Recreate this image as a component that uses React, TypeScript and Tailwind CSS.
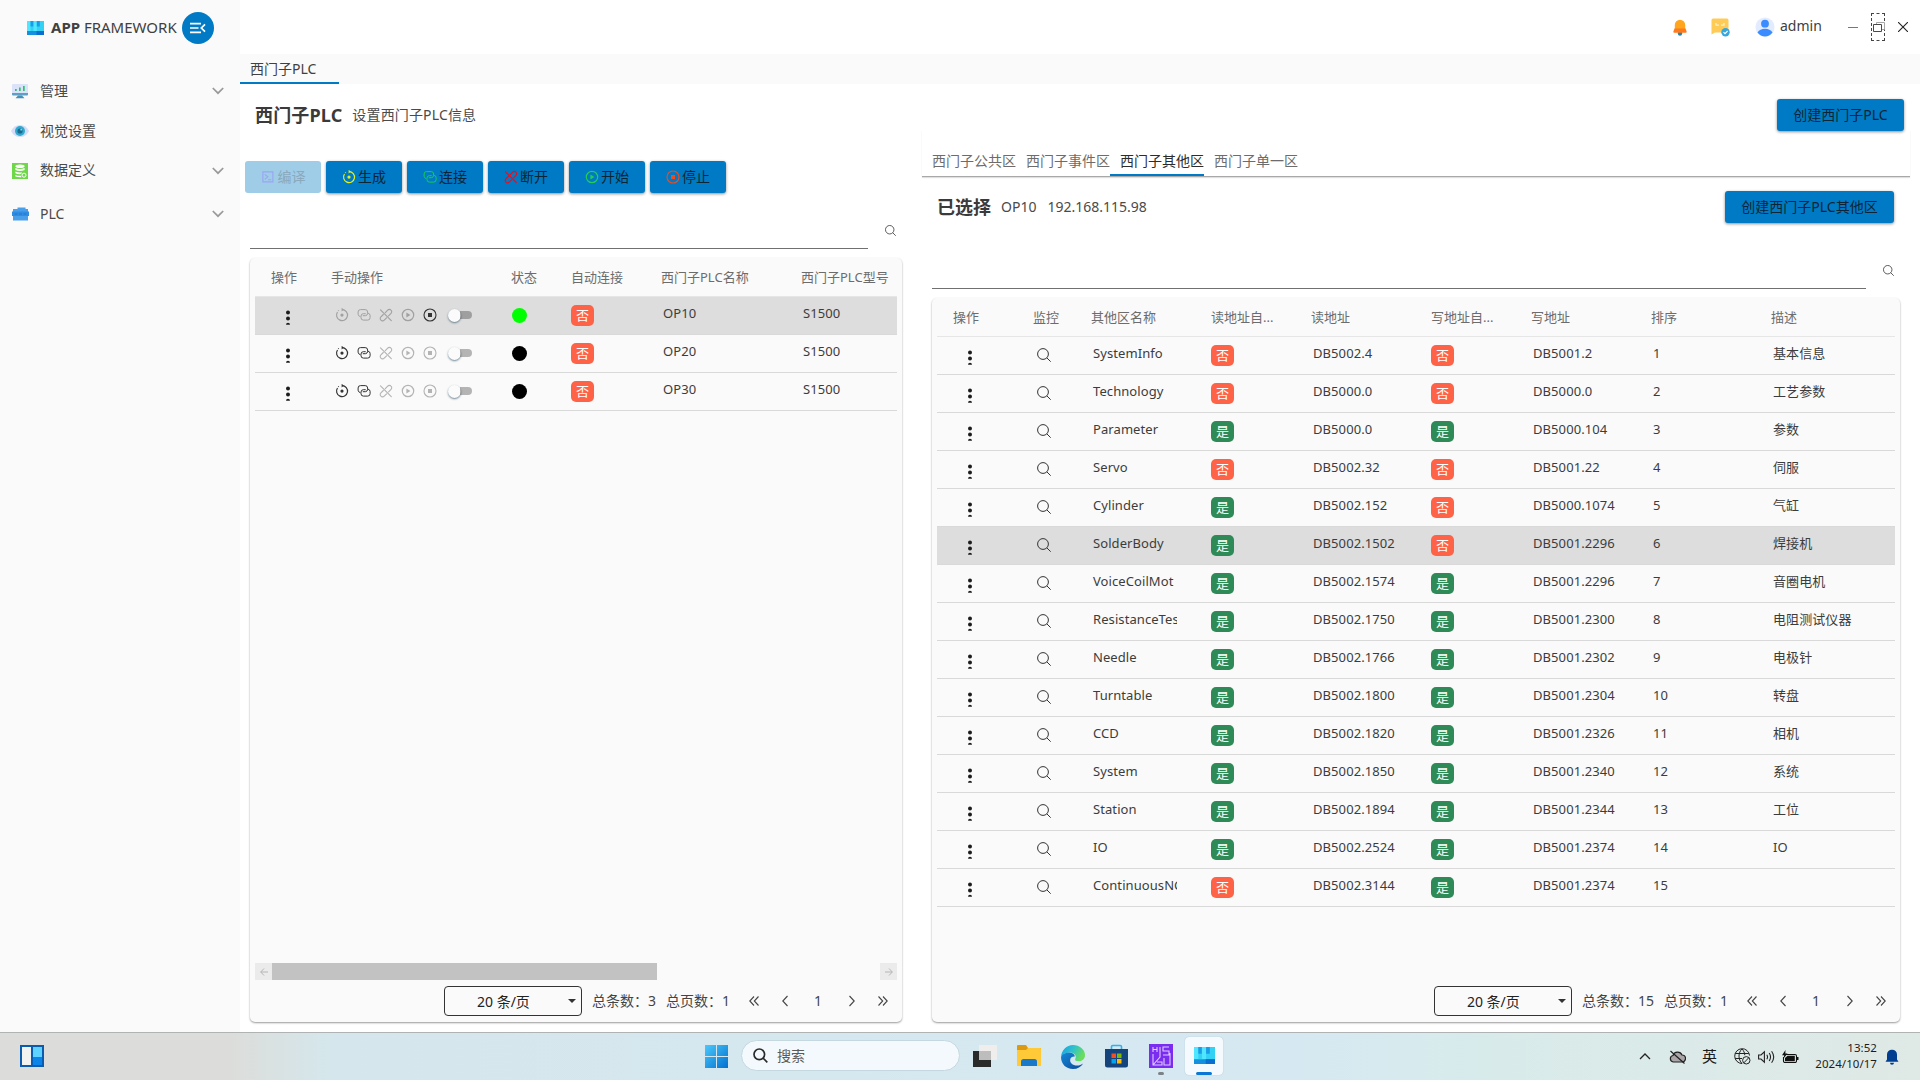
import React from "react";

type IconProps = { className?: string };

/* ---------- small icons ---------- */

const RegenIcon = ({ className = "" }: IconProps) => (
  <svg viewBox="0 0 14 14" className={`size-[14px] ${className}`} fill="none" stroke="currentColor" strokeWidth="1.2">
    <path d="M7 1.6A5.500 5.500 0 1 1 2.500 4" />
    <path d="M6.600 -.2v3.600l2.200-1.800z" fill="currentColor" stroke="none" />
    <circle cx="7" cy="7.100" r="1.600" fill="currentColor" stroke="none" />
    <path d="M3.200 2.900l.6-.5" />
  </svg>
);

const LinkIcon = ({ className = "" }: IconProps) => (
  <svg viewBox="0 0 14 14" className={`size-[14px] ${className}`} fill="none" stroke="currentColor" strokeWidth="1" strokeLinecap="round">
    <path d="M3 8.600A2.600 2.600 0 0 1 1.100 6.200V4A2.400 2.400 0 0 1 3.500 1.600h4.700A2.400 2.400 0 0 1 10.600 4v1.300A2.400 2.400 0 0 1 8.400 7.700H6.200" />
    <path d="M11.300 5.200a2.300 2.300 0 0 1 1.800 2.300v2.200a2.400 2.400 0 0 1-2.400 2.400H6.400A2.400 2.400 0 0 1 4 9.700V8.100a2.400 2.400 0 0 1 2.300-2.400h2" />
  </svg>
);

const UnlinkIcon = ({ className = "" }: IconProps) => (
  <svg viewBox="0 0 14 14" className={`size-[14px] ${className}`} fill="none" stroke="currentColor" strokeWidth="1.1" strokeLinecap="round">
    <path d="M6.300 4.600 8.700 2.100a2.300 2.300 0 0 1 3.300 0 2.300 2.300 0 0 1 0 3.300L9.600 7.800" />
    <path d="M4.300 6.500 1.900 8.900a2.300 2.300 0 0 0 0 3.300 2.300 2.300 0 0 0 3.300 0l2.400-2.400" />
    <path d="M1.500 1.800 12.300 12.600" />
  </svg>
);

const PlayIcon = ({ className = "" }: IconProps) => (
  <svg viewBox="0 0 14 14" className={`size-[14px] ${className}`} fill="none" stroke="currentColor" strokeWidth="1.2">
    <circle cx="7" cy="7" r="5.700" />
    <path d="M5.400 4.600v4.800L9.400 7z" fill="currentColor" stroke="none" />
  </svg>
);

const StopIcon = ({ className = "" }: IconProps) => (
  <svg viewBox="0 0 14 14" className={`size-[14px] ${className}`} fill="none" stroke="currentColor" strokeWidth="1.1">
    <circle cx="7" cy="7" r="6" />
    <path d="M5 5h4v4H5z" fill="currentColor" stroke="none" />
  </svg>
);

const CodeIcon = ({ className = "" }: IconProps) => (
  <svg viewBox="0 0 14 14" className={`size-[14px] ${className}`} fill="none" stroke="currentColor" strokeWidth="1.1">
    <path d="M1.900 1.900h10v10h-10zM3.800 4.300l3 2.500-3 2.500M7.200 9.800h3" />
  </svg>
);

const SearchIcon = ({ className = "" }: IconProps) => (
  <svg viewBox="0 0 14 14" className={className} fill="none" stroke="currentColor" strokeWidth="1">
    <circle cx="6" cy="6" r="5.400" />
    <path d="M9.900 9.900l3.800 3.800" />
  </svg>
);

const Chevron = () => (
  <svg viewBox="0 0 12 8" className="h-2 w-3" fill="none" stroke="#999" strokeWidth="1.7">
    <path d="M.8 1 6 6.200 11.200 1" />
  </svg>
);

const AppLogo = ({ className = "" }: IconProps) => (
  <svg viewBox="0 0 17 14" className={className} preserveAspectRatio="none">
    <path d="M0 0h17v10H0z" fill="#33d2f5" />
    <path d="M0 0h3.500v10H0zM6.500 0h3.300v10H6.500z" fill="#50e6ff" />
    <path d="M3.500 0h2.800v5.500H3.500zM9.800 0h3v5.500h-3z" fill="#1a9be8" />
    <path d="M0 10h17v4H0z" fill="#1490df" />
    <path d="M9.500 10H17v4H9.500z" fill="#0a6fd0" />
  </svg>
);

const DoubleLeft = () => (
  <svg viewBox="0 0 10 10" className="size-[10px]" fill="none" stroke="#444" strokeWidth="1.1">
    <path d="M5 .5.8 5 5 9.500M9.500 .5 5.300 5l4.200 4.500" />
  </svg>
);
const DoubleRight = () => (
  <svg viewBox="0 0 10 10" className="size-[10px]" fill="none" stroke="#444" strokeWidth="1.1">
    <path d="M5 .5 9.200 5 5 9.500M.5 .5 4.700 5 .5 9.500" />
  </svg>
);
const Left = () => (
  <svg viewBox="0 0 6 12" className="ml-[23px] h-3 w-[6px]" fill="none" stroke="#444" strokeWidth="1.1">
    <path d="M5.500 1 .8 6l4.700 5" />
  </svg>
);
const Right = () => (
  <svg viewBox="0 0 6 12" className="mr-[23px] ml-[27px] h-3 w-[6px]" fill="none" stroke="#444" strokeWidth="1.1">
    <path d="M.5 1 5.200 6 .5 11" />
  </svg>
);

/* ---------- shared pieces ---------- */

const Dots = () => (
  <svg viewBox="0 0 6 16" className="h-4 w-[6px]" fill="#1c1c1c">
    <circle cx="3" cy="2.400" r="2" />
    <circle cx="3" cy="8.400" r="2" />
    <path d="M1 14.800a2 2 0 0 1 4 0z" />
  </svg>
);

const Badge = ({ on }: { on: boolean }) => (
  <span
    className={`flex h-[21px] w-[23px] items-center justify-center rounded-[5px] text-[13px] leading-none text-white ${on ? "bg-[#2e8b57]" : "bg-[#ff6347]"}`}
  >
    {on ? "是" : "否"}
  </span>
);

const Cell = ({ children }: { children?: React.ReactNode }) => (
  <div className="mr-[14px] overflow-hidden pb-[6px] pl-[2px] leading-[20px] tracking-[0.08px] whitespace-nowrap">{children}</div>
);

const PrimaryButton = ({ children, className }: { children: React.ReactNode; className: string }) => (
  <button
    className={`flex h-8 shrink-0 items-center justify-center rounded-[3px] bg-[#007ac4] pb-px text-[14px] text-[#0b2536] shadow-[0_1px_3px_rgba(0,0,0,0.45)] ${className}`}
  >
    {children}
  </button>
);

const Switch = () => (
  <span className="ml-[3px] flex h-[15px] w-6 items-center">
    <span className="size-[13px] shrink-0 rounded-full bg-[#fbfbfb] shadow-[0_1px_2px_rgba(30,70,90,0.65)]" />
    <span className="-ml-px h-2 w-[12px] rounded-r-full bg-black/28" />
  </span>
);

const Pager = ({ total }: { total: number }) => (
  <div className="flex h-[30px] items-center text-[14px] leading-none text-[#444]">
    <div className="flex h-[30px] w-[138px] items-center rounded-[4px] border border-[#333] pr-[5px] pl-[32px] text-[#222]">
      <span className="flex-1 pt-px">20 条/页</span>
      <span className="border-x-[4px] border-t-[4px] border-x-transparent border-t-[#333]" />
    </div>
    <span className="ml-[10px]">总条数：{total}</span>
    <span className="ml-[10px] w-[65px] whitespace-nowrap">总页数：1</span>
    <div className="ml-[18px] flex items-center">
      <DoubleLeft />
      <Left />
      <span className="ml-[26px] w-2 text-center">1</span>
      <Right />
      <DoubleRight />
    </div>
  </div>
);

/* ---------- sidebar ---------- */

const MonitorGlyph = () => (
  <svg viewBox="0 0 16 16" className="size-4">
    <rect x="0" y="1" width="16" height="10.500" rx="1" fill="#dbe3fa" />
    <path d="M0 10h16v1.500a1 1 0 0 1-1 1H1a1 1 0 0 1-1-1z" fill="#5f9fc4" />
    <path d="M3 6h1.700v2H3zM7 4.500h1.700V8H7zM11 3h1.700v5H11z" fill="#35bd74" />
    <path d="M6 12.500h4l2.500 2.800h-9z" fill="#4590b8" />
  </svg>
);
const EyeGlyph = () => (
  <svg viewBox="0 0 18 14" className="-mx-px h-[14px] w-[18px]">
    <path d="M0 7Q3 1 9 1t9 6q-3 6-9 6T0 7z" fill="#d5dcf7" />
    <circle cx="9" cy="7" r="5" fill="#32a9cf" />
    <circle cx="9" cy="7" r="2.600" fill="#176a8c" />
    <circle cx="10.200" cy="5.700" r=".9" fill="#7adcf0" />
  </svg>
);
const DatabaseGlyph = () => (
  <svg viewBox="0 0 16 16" className="size-4">
    <path d="M0 0h16v16H0z" fill="#6fd84a" />
    <ellipse cx="8" cy="3.200" rx="4.600" ry="1.800" fill="#fff" />
    <path d="M3.400 4.900q4.600 2 9.200 0v2q-4.600 2-9.200 0zM3.400 8.500q3.500 1.600 6.600.8l-.8 1.700q-3 .5-5.800-.7zM3.400 11.900q2.600 1.100 5.500.9l.6 1.500q-3.700.2-6.100-.7z" fill="#fff" />
    <circle cx="12" cy="12.200" r="2" fill="none" stroke="#fff" strokeWidth="1" />
  </svg>
);
const FolderGlyph = () => (
  <svg viewBox="0 0 17 14" className="-mr-px h-[14px] w-[17px]">
    <path d="M1 2h4.500V.5h8V2H16v11.500H1z" fill="#4a9fea" />
    <path d="M0 4.500h17v4.500H0z" fill="#2f8ce2" />
    <path d="M2.500 7h3M7 7h3M11.500 7h3" stroke="#2477cc" strokeWidth="1.1" />
  </svg>
);

const menu = [
  { label: "管理", icon: <MonitorGlyph />, open: true, cls: "h-[40px]" },
  { label: "视觉设置", icon: <EyeGlyph />, open: false, cls: "h-[40px]" },
  { label: "数据定义", icon: <DatabaseGlyph />, open: true, cls: "h-[39px]" },
  { label: "PLC", icon: <FolderGlyph />, open: true, cls: "h-[48px]" },
];

const Sidebar = () => (
  <aside className="w-[240px] shrink-0 bg-[#fafafa]">
    <div className="flex h-[54px] items-center pb-px pl-[27px]">
      <AppLogo className="mt-[2px] h-[14px] w-[17px]" />
      <div className="ml-[7px] w-[131px] pt-px text-[15px] leading-none whitespace-nowrap text-[#404040]">
        <b>APP</b> FRAMEWORK
      </div>
      <div className="mt-[3px] flex size-8 items-center justify-center rounded-full bg-[#007ac4]">
        <svg viewBox="0 0 16 12" className="h-3 w-4" fill="none" stroke="#fff" strokeWidth="1.7">
          <path d="M0 1.600h11M0 6h8.500M0 10.400h11M15 2.300 11.300 6l3.700 3.700" />
        </svg>
      </div>
    </div>
    <nav className="pt-[17px]">
      {menu.map((m) => (
        <div key={m.label} className={`flex items-center pr-4 pl-3 text-[14px] text-[#4a4a4a] ${m.cls}`}>
          {m.icon}
          <span className="ml-3 flex-1 pb-[2px]">{m.label}</span>
          {m.open && <Chevron />}
        </div>
      ))}
    </nav>
  </aside>
);

/* ---------- header ---------- */

const Header = () => (
  <header className="flex h-[54px] items-center justify-end bg-white pr-3">
    <svg viewBox="0 0 14 17" className="h-[17px] w-[14px]">
      <circle cx="7" cy="14.500" r="2.200" fill="#2a83a8" />
      <path d="M1.800 11V6a5.200 5.200 0 0 1 10.400 0v5z" fill="#ffa51e" />
      <path d="M1.500 9.500h11l1.200 3.200q0 1-1 1H1.300q-1 0-1-1z" fill="#ff7a1c" />
    </svg>
    <svg viewBox="0 0 19 19" className="ml-6 size-[19px]">
      <path d="M2 .5h14a1.500 1.500 0 0 1 1.500 1.500v12.500H4L.5 16.500V2A1.500 1.500 0 0 1 2 .5z" fill="#ffcb57" />
      <path d="M5 5v2.200h3M10 7.200h3V5" stroke="#fff0c8" strokeWidth="1.2" fill="none" />
      <circle cx="14.500" cy="14.200" r="4.200" fill="#37a6dc" />
      <path d="M12.500 14.200l1.500 1.500 2.600-2.700" stroke="#fff" strokeWidth="1.1" fill="none" />
    </svg>
    <svg viewBox="0 0 20 20" className="ml-[25px] size-5">
      <circle cx="10" cy="10" r="9.600" fill="#e3ebff" />
      <circle cx="10" cy="6.700" r="3.900" fill="#3b8cff" />
      <path d="M2.500 15.500Q5 11.800 10 11.800t7.500 3.700Q14.500 19.500 10 19.500t-7.500-4z" fill="#3b8cff" />
    </svg>
    <span className="ml-[5px] w-[43px] pb-[3px] text-[14px] text-[#404040]">admin</span>
    <span className="ml-[25px] h-px w-[10px] bg-[#777]" />
    <span className="ml-[13px] flex h-[28px] w-[14px] items-center justify-center border border-dashed border-[#444]">
      <svg viewBox="0 0 13 11" className="h-[11px] w-[13px] shrink-0" fill="none">
        <path d="M4.500 2V.5h8v7H10" stroke="#a8a8a8" />
        <path d="M1.500 2.500h8v7h-8z" stroke="#4a4a4a" />
      </svg>
    </span>
    <svg viewBox="0 0 10 10" className="ml-[13px] size-[10px]" fill="none" stroke="#222" strokeWidth="1.1">
      <path d="M0 0l10 10M10 0 0 10" />
    </svg>
  </header>
);

/* ---------- left panel ---------- */

const actions = [
  { label: "生成", icon: <RegenIcon className="text-[#e6f01e]" /> },
  { label: "连接", icon: <LinkIcon className="text-[#12d04a]" /> },
  { label: "断开", icon: <UnlinkIcon className="text-[#e01020]" /> },
  { label: "开始", icon: <PlayIcon className="text-[#22cc55]" /> },
  { label: "停止", icon: <StopIcon className="text-[#f04a1c]" /> },
];

const plcs = [
  { name: "OP10", running: true },
  { name: "OP20", running: false },
  { name: "OP30", running: false },
];

const LEFT_COLS = "grid-cols-[60px_180px_60px_90px_140px_1fr]";

const LeftPanel = () => (
  <section className="flex w-[657px] shrink-0 flex-col pl-[5px]">
    <div className="mt-[31px] flex gap-[5px]">
      <button className="flex h-8 w-[76px] items-center justify-center gap-[3px] rounded-[3px] bg-[#9fcce7] pb-px text-[14px] text-[#8aa9bd]">
        <CodeIcon className="text-[#9aa4f5]" />
        <span>编译</span>
      </button>
      {actions.map((a) => (
        <PrimaryButton key={a.label} className="w-[76px] gap-[2px]">
          {a.icon}
          <span>{a.label}</span>
        </PrimaryButton>
      ))}
    </div>
    <div className="ml-[5px] flex h-[56px] pr-[1px]">
      <div className="w-[618px] border-b border-[#707070]" />
      <SearchIcon className="mt-[32px] ml-[17px] size-[11px] text-[#333]" />
    </div>
    <div className="mt-[9px] ml-[5px] flex h-[764px] w-[652px] flex-col rounded-[5px] bg-[#fafafa] px-[5px] shadow-[0_1px_2px_rgba(0,0,0,0.4)]">
      <div className={`grid h-[39px] items-center border-b border-[#e6e6e6] pt-px pl-4 text-[13px] whitespace-nowrap text-[#6c6c6c] ${LEFT_COLS}`}>
        <span>操作</span>
        <span>手动操作</span>
        <span>状态</span>
        <span>自动连接</span>
        <span>西门子PLC名称</span>
        <span>西门子PLC型号</span>
      </div>
      {plcs.map((p) => (
        <div
          key={p.name}
          className={`grid h-[38px] items-center border-b border-[#d9d9d9] pl-4 text-[13px] text-[#3c3c3c] ${LEFT_COLS} ${p.running ? "bg-[#ddd]" : ""}`}
        >
          <div className="pt-[4px] pl-[14px]">
            <Dots />
          </div>
          <div className="flex items-center gap-2 pb-px pl-[4px] text-[#333]">
            <RegenIcon className={p.running ? "opacity-35" : ""} />
            <LinkIcon className={p.running ? "opacity-35" : ""} />
            <UnlinkIcon className="opacity-35" />
            <PlayIcon className="opacity-35" />
            <StopIcon className={p.running ? "" : "opacity-35"} />
            <Switch />
          </div>
          <div className="pl-px">
            <div className={`size-[15px] rounded-full ${p.running ? "bg-[#00ff00]" : "bg-black"}`} />
          </div>
          <Badge on={false} />
          <Cell>{p.name}</Cell>
          <Cell>S1500</Cell>
        </div>
      ))}
      <div className="flex-1" />
      <div className="flex h-[17px]">
        <div className="flex w-[17px] items-center justify-center bg-[#ebebeb]">
          <svg viewBox="0 0 8 8" className="size-2" fill="none" stroke="#b5b5b5">
            <path d="M8 4H.7M4 .5.700 4 4 7.500" />
          </svg>
        </div>
        <div className="w-[385px] bg-[#c2c2c2]" />
        <div className="flex-1" />
        <div className="flex w-[17px] items-center justify-center bg-[#ebebeb]">
          <svg viewBox="0 0 8 8" className="size-2" fill="none" stroke="#b5b5b5">
            <path d="M0 4h7.300M4 .5 7.300 4 4 7.500" />
          </svg>
        </div>
      </div>
      <div className="mt-[6px] mb-[6px] flex justify-end pr-[9px]">
        <Pager total={3} />
      </div>
    </div>
  </section>
);

/* ---------- right panel ---------- */

type Area = [string, boolean, string, boolean, string, string];
const areas: Area[] = [
  ["SystemInfo", false, "DB5002.4", false, "DB5001.2", "基本信息"],
  ["Technology", false, "DB5000.0", false, "DB5000.0", "工艺参数"],
  ["Parameter", true, "DB5000.0", true, "DB5000.104", "参数"],
  ["Servo", false, "DB5002.32", false, "DB5001.22", "伺服"],
  ["Cylinder", true, "DB5002.152", false, "DB5000.1074", "气缸"],
  ["SolderBody", true, "DB5002.1502", false, "DB5001.2296", "焊接机"],
  ["VoiceCoilMot", true, "DB5002.1574", true, "DB5001.2296", "音圈电机"],
  ["ResistanceTes", true, "DB5002.1750", true, "DB5001.2300", "电阻测试仪器"],
  ["Needle", true, "DB5002.1766", true, "DB5001.2302", "电极针"],
  ["Turntable", true, "DB5002.1800", true, "DB5001.2304", "转盘"],
  ["CCD", true, "DB5002.1820", true, "DB5001.2326", "相机"],
  ["System", true, "DB5002.1850", true, "DB5001.2340", "系统"],
  ["Station", true, "DB5002.1894", true, "DB5001.2344", "工位"],
  ["IO", true, "DB5002.2524", true, "DB5001.2374", "IO"],
  ["ContinuousNG", false, "DB5002.3144", true, "DB5001.2374", ""],
];

const RIGHT_COLS = "grid-cols-[80px_58px_120px_100px_120px_100px_120px_120px_1fr]";
const areaTabs = ["西门子公共区", "西门子事件区", "西门子其他区", "西门子单一区"];

const RightPanel = () => (
  <section className="flex min-w-0 flex-1 flex-col pl-[25px]">
    <div className="flex h-[47px] w-[988px] items-end border-b border-[#a8a8a8] shadow-[0_1px_1px_rgba(0,0,0,0.12)]">
      {areaTabs.map((t) => (
        <div
          key={t}
          className={`flex h-[30px] w-[94px] items-center justify-end border-b-2 text-[14px] ${t === "西门子其他区" ? "border-[#007ac4] text-[#2c2c2c]" : "border-transparent text-[#6c6c6c]"}`}
        >
          {t}
        </div>
      ))}
    </div>
    <div className="mt-[14px] flex h-8 items-center pr-[26px] pl-[15px] text-[14px] text-[#4a4a4a]">
      <b className="text-[18px] text-[#3a3a3a]">已选择</b>
      <span className="ml-[10px] pb-[2px]">OP10</span>
      <span className="ml-[11px] flex-1 pb-[2px]">192.168.115.98</span>
      <PrimaryButton className="w-[169px]">创建西门子PLC其他区</PrimaryButton>
    </div>
    <div className="ml-[10px] flex h-[66px]">
      <div className="w-[934px] border-b border-[#707070]" />
      <SearchIcon className="mt-[42px] ml-[17px] size-[11px] text-[#333]" />
    </div>
    <div className="mt-[9px] ml-[10px] flex h-[724px] w-[968px] flex-col rounded-[5px] bg-[#fafafa] px-[5px] shadow-[0_1px_2px_rgba(0,0,0,0.4)]">
      <div className={`grid h-[39px] items-center border-b border-[#e6e6e6] pt-px pl-4 text-[13px] whitespace-nowrap text-[#6c6c6c] ${RIGHT_COLS}`}>
        <span>操作</span>
        <span>监控</span>
        <span>其他区名称</span>
        <span>读地址自...</span>
        <span>读地址</span>
        <span>写地址自...</span>
        <span>写地址</span>
        <span>排序</span>
        <span>描述</span>
      </div>
      {areas.map(([name, readAuto, read, writeAuto, write, desc], i) => (
        <div
          key={name}
          className={`grid h-[38px] items-center border-b border-[#d9d9d9] pl-4 text-[13px] text-[#3c3c3c] ${RIGHT_COLS} ${i === 5 ? "bg-[#ddd]" : ""}`}
        >
          <div className="pt-[4px] pl-[14px]">
            <Dots />
          </div>
          <div className="pb-[2px] pl-[4px]">
            <SearchIcon className="size-[14px] text-[#333]" />
          </div>
          <div className="mr-[34px] overflow-hidden pb-[6px] pl-[2px] leading-[20px] tracking-[0.08px] whitespace-nowrap">{name}</div>
          <Badge on={readAuto} />
          <Cell>{read}</Cell>
          <Badge on={writeAuto} />
          <Cell>{write}</Cell>
          <Cell>{i + 1}</Cell>
          <Cell>{desc}</Cell>
        </div>
      ))}
      <div className="flex-1" />
      <div className="mb-[6px] flex justify-end pr-[9px]">
        <Pager total={15} />
      </div>
    </div>
  </section>
);

/* ---------- taskbar ---------- */

const Taskbar = () => (
  <footer className="flex h-[48px] items-center border-t border-[#b0b3b4] bg-[linear-gradient(90deg,#dcddda_0px,#dcddda_230px,#d5e7ec_330px,#d6e9f2_1300px,#d8ebea_1500px,#dfe9e6_1920px)]">
    <svg viewBox="0 0 24 22" className="mb-px ml-5 h-[22px] w-6">
      <path d="M0 0h24v22H0z" fill="#0a5cb0" />
      <path d="M2 2h9v18H2z" fill="#f2f2f0" />
      <path d="M13 2h9v10h-9z" fill="#5fd3ff" />
      <path d="M13 12h9v8h-9z" fill="#0a84e8" />
    </svg>
    <svg viewBox="0 0 23 23" className="ml-[661px] size-[23px]">
      <defs>
        <linearGradient id="win" x1="0" y1="0" x2="1" y2="1">
          <stop offset="0" stopColor="#4cc8fb" />
          <stop offset="1" stopColor="#0070d0" />
        </linearGradient>
      </defs>
      <path d="M0 0h11v11H0zM12 0h11v11H12zM0 12h11v11H0zM12 12h11v11H12z" fill="url(#win)" />
    </svg>
    <div className="mb-[2px] ml-[13px] flex h-[31px] w-[219px] items-center rounded-full border border-[#c5d8e0] bg-[#f3f9fc] pl-[11px] text-[14px] text-[#5a5a5a]">
      <svg viewBox="0 0 15 15" className="size-[15px]" fill="none" stroke="#2a2a2a" strokeWidth="1.7">
        <circle cx="6.300" cy="6.300" r="5.300" />
        <path d="M10 10l4.300 4.300" />
      </svg>
      <span className="ml-[9px]">搜索</span>
    </div>
    <svg viewBox="0 0 24 22" className="mb-px ml-[13px] h-[22px] w-6">
      <path d="M6 0h18v15H6z" fill="#f0eded" />
      <path d="M0 6h18v16H0z" fill="#2a2a2a" />
      <path d="M6 6h12v9H6z" fill="#bdbdbd" />
    </svg>
    <svg viewBox="0 0 24 22" className="mb-px ml-5 h-[22px] w-6">
      <path d="M1 0h8l2 3H24v6H0V1a1 1 0 0 1 1-1z" fill="#dc9a12" />
      <path d="M0 5h9l2-2h12a1 1 0 0 1 1 1v17H0z" fill="#ffc937" />
      <path d="M4 21v-4.500A2.500 2.500 0 0 1 6.500 14h11a2.500 2.500 0 0 1 2.500 2.500V21z" fill="#1a78c8" />
    </svg>
    <svg viewBox="0 0 24 24" className="ml-5 size-6">
      <defs>
        <linearGradient id="edgeA" x1="0" y1="0" x2="1" y2=".4">
          <stop offset="0" stopColor="#1b9de0" />
          <stop offset=".5" stopColor="#2cc0d0" />
          <stop offset="1" stopColor="#6ade5a" />
        </linearGradient>
        <linearGradient id="edgeB" x1="0" y1="0" x2="1" y2="1">
          <stop offset="0" stopColor="#1487d8" />
          <stop offset="1" stopColor="#0c4a9a" />
        </linearGradient>
      </defs>
      <path d="M0 12C.5 5 5.500 0 12 0s12 4.500 12 10c0 4-3 6.300-6.300 6.300-2.700 0-4-1-3.500-2.300 2-3.500-1.200-6.500-5-6.500C5 7.500 1 9.500 0 12z" fill="url(#edgeA)" />
      <path d="M0 12c1-3 5-4.600 8.500-4.500 3.300.1 5.300 2 5.300 4C9 11 8 16 10.500 18.500c3 3 8.500 2.500 11.700 0C20 22 16.500 24 12 24 5 24 0 19 0 12z" fill="url(#edgeB)" />
    </svg>
    <svg viewBox="0 0 23 24" className="mb-px ml-5 h-6 w-[23px]">
      <path d="M6.500 6V2.800A1.300 1.300 0 0 1 7.800 1.500h7.400a1.300 1.300 0 0 1 1.300 1.300V6" fill="none" stroke="#2bb4ee" strokeWidth="1.6" />
      <path d="M0 5h23v16a2.500 2.500 0 0 1-2.500 2.500h-18A2.500 2.500 0 0 1 0 21z" fill="#15447c" />
      <path d="M6.500 9.500H11V14H6.500z" fill="#f25022" />
      <path d="M12 9.500h4.500V14H12z" fill="#7fba00" />
      <path d="M6.500 15H11v4.500H6.500z" fill="#00a4ef" />
      <path d="M12 15h4.500v4.500H12z" fill="#ffb900" />
    </svg>
    <div className="ml-[21px] flex h-[38px] w-6 flex-col items-center pt-[6px]">
      <svg viewBox="0 0 24 24" className="size-6" fill="none">
        <path d="M0 0h24v24H0z" fill="#7a2cf0" />
        <path d="M4 3v5M8 3v5M4 5.500h4M11 3v10l-7 8M4 10v11h9v-3H8M20 3h-6v4h6v4h-6M21 9v12h-6v-7" stroke="#e0ccff" strokeWidth="1.1" />
      </svg>
      <span className="mt-1 h-[3px] w-[6px] shrink-0 rounded-full bg-[#7c8386]" />
    </div>
    <div className="mb-px ml-[12px] flex h-[38px] w-[38px] flex-col items-center rounded-[4px] bg-[#f4fafd] pt-[10px] shadow-[0_0_1px_rgba(0,0,0,0.25)]">
      <AppLogo className="h-[17px] w-[21px]" />
      <span className="mt-[8px] h-[3px] w-4 rounded-full bg-[#0a78d4]" />
    </div>

    <div className="ml-auto flex items-center pr-[21px] text-[#1c1c1c]">
      <svg viewBox="0 0 12 7" className="mr-[18px] h-[7px] w-3" fill="none" stroke="#222" strokeWidth="1.3">
        <path d="M1 6l5-5 5 5" />
      </svg>
      <svg viewBox="0 0 17 14" className="h-[14px] w-[17px]" fill="none" stroke="#222" strokeWidth="1.2">
        <path d="M4.200 12A3.300 3.300 0 0 1 4 5.500 4.800 4.800 0 0 1 13 5a3.500 3.500 0 0 1 0 7z" fill="#aaa5a8" />
        <path d="M1.500 1l14 12.500" />
      </svg>
      <span className="ml-[16px] w-[32px] pb-px text-[15px] leading-none">英</span>
      <svg viewBox="0 0 17 17" className="size-[17px]" fill="none" stroke="#222" strokeWidth="1">
        <path d="M8 15.500A7.400 7.400 0 1 1 15.500 7.500M1.200 5.500h13.600M1.200 10.500H8M8 15.500c-4-4-4-11 0-14.500 1.800 1.800 2.700 4 2.800 6.200" />
        <circle cx="12.300" cy="12.300" r="3.700" />
        <path d="M9.800 14.900l5-5.200" />
      </svg>
      <svg viewBox="0 0 17 14" className="ml-[7px] h-[14px] w-[17px]" fill="none" stroke="#222" strokeWidth="1.1">
        <path d="M.6 5v4H3l3.400 3.200V1.800L3 5zM8.800 4.700q1.500 2.300 0 4.600M11.200 3q2.700 4 0 8M13.600 1.200q4.200 5.800 0 11.600" />
      </svg>
      <svg viewBox="0 0 17 14" className="ml-[7px] h-[14px] w-[17px]">
        <path d="M3 4.500h10a1.500 1.500 0 0 1 1.500 1.500v5a1.500 1.500 0 0 1-1.500 1.500H3A1.500 1.500 0 0 1 1.500 11V7" fill="none" stroke="#111" strokeWidth="1.1" />
        <path d="M5.500 5.800h7.300v5.400H3V8zM15 7h1.500v3H15zM3.500 0 0 5.200h2.200L1.500 8.500 5.500 3.500H3.300z" fill="#111" />
      </svg>
      <div className="ml-[4px] w-[74px] pb-px text-right text-[11.5px] leading-4 tracking-[0.05px]">
        <div>13:52</div>
        <div>2024/10/17</div>
      </div>
      <svg viewBox="0 0 14 16" className="ml-2 h-4 w-[14px]" fill="#003e92">
        <path d="M2 10.500V5.500A4.800 4.800 0 0 1 7 .7a4.800 4.800 0 0 1 5 4.800v5l1.500 2.300H.5zM5 13.800h4a2 2 0 0 1-4 0z" />
      </svg>
    </div>
  </footer>
);

export default function App() {
  return (
    <div className="flex h-[1080px] w-[1920px] flex-col overflow-hidden bg-white font-['Noto_Sans','Noto_Sans_CJK_SC',sans-serif]">
      <div className="flex h-[1032px] shrink-0">
        <Sidebar />
        <main className="flex min-w-0 flex-1 flex-col">
          <Header />
          <div className="flex h-[30px] shrink-0 bg-[#fafafa]">
            <div className="flex w-[99px] items-center border-b-2 border-[#007ac4] pl-[10px] text-[14px] text-[#404040]">西门子PLC</div>
          </div>
          <div className="flex h-[46px] items-center pt-[15px] pr-4 pl-[15px] text-[#4a4a4a]">
            <b className="text-[18px] leading-8 tracking-[0.15px] text-[#3a3a3a]">西门子PLC</b>
            <span className="ml-[10px] flex-1 text-[14px] tracking-[0.15px]">设置西门子PLC信息</span>
            <PrimaryButton className="w-[127px]">创建西门子PLC</PrimaryButton>
          </div>
          <div className="flex min-h-0 flex-1">
            <LeftPanel />
            <RightPanel />
          </div>
        </main>
      </div>
      <Taskbar />
    </div>
  );
}
